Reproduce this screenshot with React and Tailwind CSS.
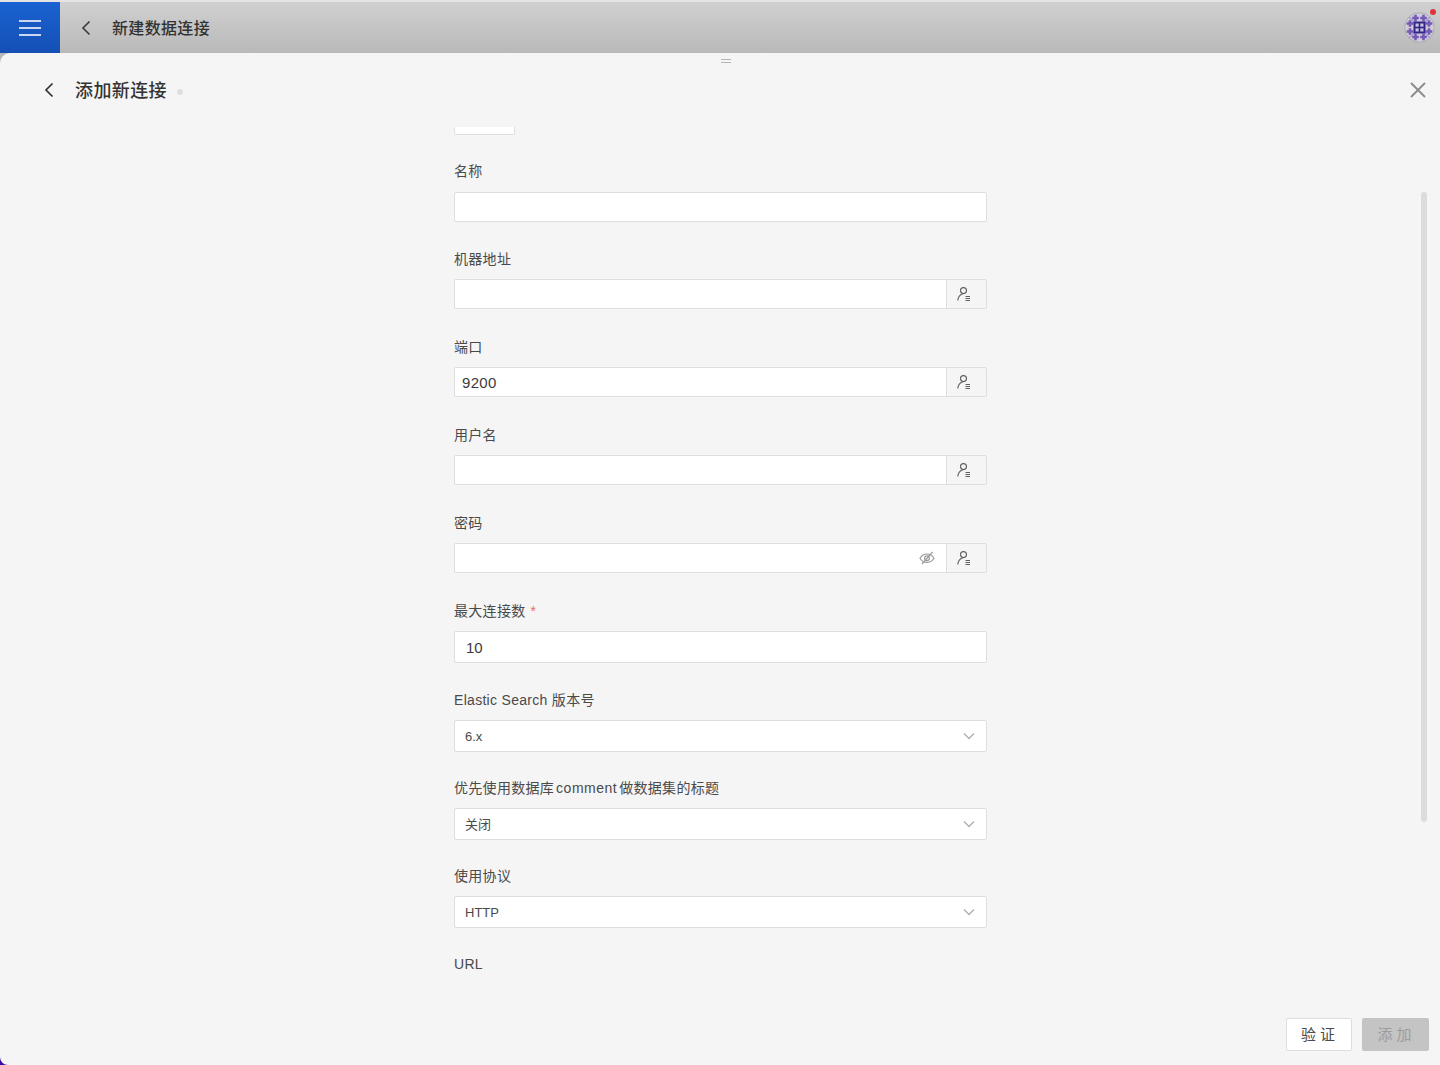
import React from 'react';

const fontStack = "font-['Liberation_Sans','Noto_Sans_CJK_SC',sans-serif]";

const UserListIcon = () => (
  <svg width="16" height="16" viewBox="0 0 16 16" fill="none" stroke="#5f5f5f" strokeWidth="1.100">
    <circle cx="7.500" cy="4.600" r="3" />
    <path d="M1.800 14.500c.4-3.600 2.200-5.900 4.800-6.500" />
    <path d="M9.500 10.500h4.500M9.500 12.500h4.500M9.500 14.500h4.500" strokeWidth="1" />
  </svg>
);

const EyeOffIcon = () => (
  <svg width="16" height="16" viewBox="0 0 16 16" fill="none" stroke="#9a9a9a" strokeWidth="1.200">
    <path d="M1 8.200c1.700-2.800 4-4.200 7-4.200s5.300 1.400 7 4.200c-1.700 2.800-4 4.200-7 4.200s-5.300-1.400-7-4.200z" />
    <circle cx="8" cy="8.200" r="2.400" />
    <path d="M3 14L13.500 2" />
  </svg>
);

const ChevronDown = () => (
  <svg width="12" height="8" viewBox="0 0 12 8" fill="none" stroke="#b0b0b0" strokeWidth="1.400">
    <path d="M1 1.500l5 5 5-5" />
  </svg>
);

// small purple crosses around the centre of the logo
const logoCrosses = [
  [11.500, 6], [19.500, 6], [11.500, 25], [19.500, 25],
  [6, 11.500], [6, 19.500], [25, 11.500], [25, 19.500],
];

const Logo = () => (
  <svg width="31" height="31" viewBox="0 0 31 31">
    <circle cx="15.500" cy="15.500" r="14.800" fill="#cfccd6" stroke="#a5a5ab" strokeWidth="0.800" />
    <path d="M5 5l21 21M26 5L5 26" stroke="#a99cd0" strokeWidth="1.500" />
    <g fill="#7559b6">
      {logoCrosses.map(([x, y]) => (
        <path key={`${x}-${y}`} d={`M${x - 1.300} ${y - 3.300}h2.600v2h2v2.600h-2v2h-2.600v-2h-2v-2.600h2z`} />
      ))}
    </g>
    <rect x="9.500" y="9.500" width="12" height="12" fill="#33248a" />
    <g fill="#c5c2e0">
      <rect x="11.500" y="11.500" width="3.200" height="3.200" />
      <rect x="16.300" y="11.500" width="3.200" height="3.200" />
      <rect x="11.500" y="16.300" width="3.200" height="3.200" />
      <rect x="16.300" y="16.300" width="3.200" height="3.200" />
    </g>
  </svg>
);

const Field = ({ label, required, className, children }) => (
  <div className={className}>
    <div className="h-[21px] mb-[9px] text-sm leading-[21px] tracking-[0.3px] text-[#4a4a4a]">
      {label}
      {required && <span className="ml-[5px] text-[#f06a6a]">*</span>}
    </div>
    {children}
  </div>
);

const AddonInput = ({ value, password }) => (
  <div className="flex h-[30px] rounded-[2px] border border-[#dedede] bg-white">
    <div className="flex flex-1 items-center justify-between pl-[7px] pr-[11px] text-[15px] tracking-[0.3px] text-[#3c3c3c]">
      <span className="pt-[2px]">{value}</span>
      {password && <EyeOffIcon />}
    </div>
    <div className="flex w-[40px] items-center justify-center border-l border-[#dedede] bg-[#f5f5f5] pr-[6px]">
      <UserListIcon />
    </div>
  </div>
);

const SelectBox = ({ value }) => (
  <div className="flex h-[32px] items-center justify-between rounded-[2px] border border-[#dedede] bg-white pl-[10px] pr-[11px] text-[13px] text-[#4a4a4a]">
    <span className="pt-[2px]">{value}</span>
    <ChevronDown />
  </div>
);

export default function App() {
  return (
    <div className={`flex h-[1065px] flex-col overflow-hidden bg-[linear-gradient(#b8b8b8_50%,#3a0ca3_50%)] ${fontStack}`}>
      {/* top bar */}
      <div className="flex h-[53px] items-stretch border-t-2 border-[#e4e4e4] bg-gradient-to-b from-[#d0d0d0] to-[#b9b9b9]">
        <div className="flex w-[60px] flex-col items-center justify-center gap-[5px] bg-gradient-to-b from-[#1a62d2] to-[#1450b4]">
          <span className="h-[2px] w-[22px] bg-[#c9d8f0]" />
          <span className="h-[2px] w-[22px] bg-[#c9d8f0]" />
          <span className="h-[2px] w-[22px] bg-[#c9d8f0]" />
        </div>
        <div className="flex items-center pl-[21px]">
          <svg width="10" height="16" viewBox="0 0 10 16" fill="none" stroke="#3a3a3a" strokeWidth="1.600">
            <path d="M8.500 1.500L2 8l6.500 6.500" />
          </svg>
          <span className="ml-[21px] pt-[2px] text-base font-medium tracking-[0.33px] text-[#333]">新建数据连接</span>
        </div>
        <div className="relative ml-auto mr-[5px] self-center">
          <Logo />
          <span className="absolute right-[-1px] top-[-3px] h-[6px] w-[6px] rounded-full bg-[#e0323c]" />
        </div>
      </div>

      {/* panel */}
      <div className="relative flex flex-1 flex-col overflow-hidden rounded-tl-[10px] rounded-bl-[8px] bg-[#f5f5f5]">
        <div className="absolute left-[721px] top-[6px] flex flex-col gap-[2px]">
          <span className="h-[1px] w-[10px] bg-[#b5b5b5]" />
          <span className="h-[1px] w-[10px] bg-[#b5b5b5]" />
        </div>

        <div className="flex h-[74px] shrink-0 items-center pl-[44px] pr-[13px]">
          <svg width="10" height="16" viewBox="0 0 10 16" fill="none" stroke="#333" strokeWidth="1.700">
            <path d="M8.500 1.500L2 8l6.500 6.500" />
          </svg>
          <span className="ml-[21px] pt-[2px] text-lg font-medium tracking-[0.4px] text-[#333]">添加新连接</span>
          <span className="ml-[10px] mt-[3px] h-[6px] w-[6px] rounded-full bg-[#dedede]" />
          <svg className="ml-auto" width="18" height="18" viewBox="0 0 18 18" stroke="#8a8a8a" strokeWidth="1.800">
            <path d="M2 2l14 14M16 2L2 16" />
          </svg>
        </div>

        <div className="relative flex-1 overflow-hidden">
          <div className="absolute right-[13px] top-[65px] h-[630px] w-[6px] rounded-full bg-[#dcdcdc]" />
          <div className="ml-[454px] w-[533px]">
            <div className="h-[8px] w-[61px] rounded-b-[2px] border border-t-0 border-[#dedede] bg-white" />
            <Field label="名称" className="mt-[26px]">
              <div className="mt-[10px] h-[30px] rounded-[2px] border border-[#dedede] bg-white" />
            </Field>
            <Field label="机器地址" className="mt-[27px]">
              <AddonInput />
            </Field>
            <Field label="端口" className="mt-[28px]">
              <AddonInput value="9200" />
            </Field>
            <Field label="用户名" className="mt-[28px]">
              <AddonInput />
            </Field>
            <Field label="密码" className="mt-[28px]">
              <AddonInput password />
            </Field>
            <Field label="最大连接数" required className="mt-[28px]">
              <div className="flex h-[32px] items-center rounded-[2px] border border-[#dedede] bg-white pl-[11px] pt-[2px] text-[15px] text-[#3c3c3c]">
                10
              </div>
            </Field>
            <Field label="Elastic Search 版本号" className="mt-[27px]">
              <SelectBox value="6.x" />
            </Field>
            <Field
              label={
                <>
                  优先使用数据库<span className="mx-[2px] tracking-[0.5px]">comment</span>做数据集的标题
                </>
              }
              className="mt-[26px]"
            >
              <SelectBox value="关闭" />
            </Field>
            <Field label="使用协议" className="mt-[26px]">
              <SelectBox value="HTTP" />
            </Field>
            <Field label="URL" className="mt-[26px]" />
          </div>
        </div>

        <div className="absolute bottom-[14px] right-[11px] flex gap-[10px] text-[15px]">
          <button className="h-[33px] w-[66px] rounded-[2px] border border-[#dedede] bg-white pl-[2px] pt-[2px] tracking-[4px] text-[#4a4a4a]">
            验证
          </button>
          <button className="h-[33px] w-[67px] rounded-[2px] bg-[#c4c4c4] pl-[2px] pt-[2px] tracking-[4px] text-[#9c9c9c]">
            添加
          </button>
        </div>
      </div>
    </div>
  );
}
